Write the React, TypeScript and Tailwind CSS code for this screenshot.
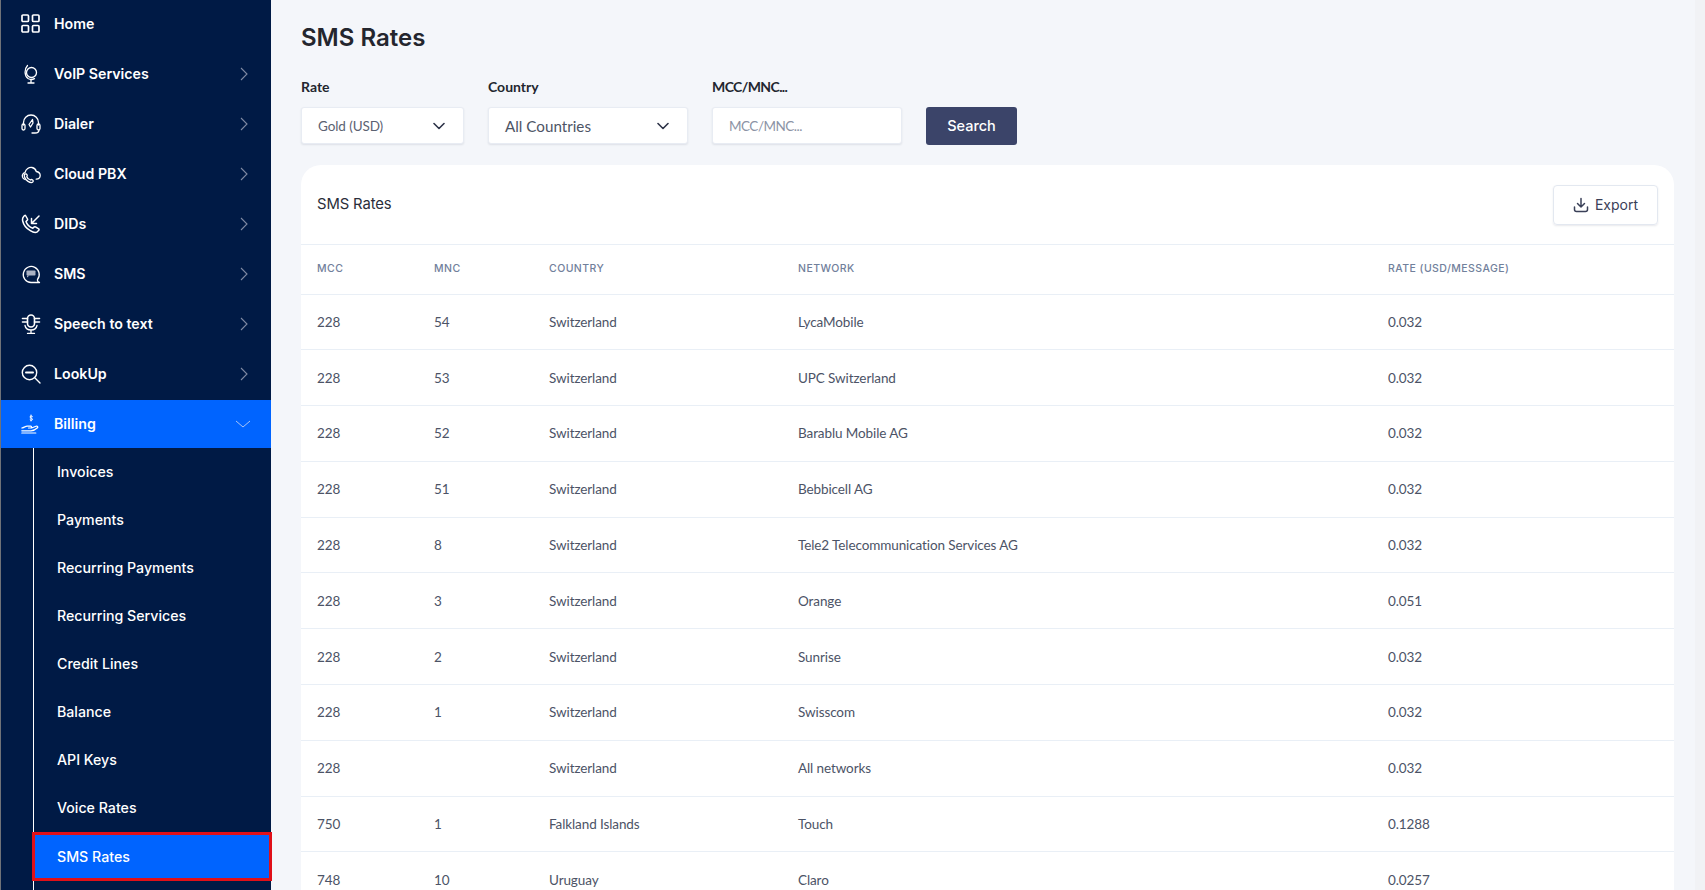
import React from "react";

const poppins = "font-['Inter','Liberation_Sans',sans-serif]";
const source = "font-['Lato','Noto_Sans',sans-serif]";

const base = { fill: "none", stroke: "white", strokeWidth: 1.3, strokeLinecap: "round" as const, strokeLinejoin: "round" as const };

const HomeIcon = () => (
  <svg width="20" height="20" viewBox="0 0 20 20" {...base} strokeWidth={1.7}>
    <rect x="1" y="1" width="6.5" height="6.5" rx="1" />
    <rect x="11.5" y="1" width="6.5" height="6.5" rx="1" />
    <rect x="1" y="11.5" width="6.5" height="6.5" rx="1" />
    <rect x="11.5" y="11.5" width="6.5" height="6.5" rx="1" />
  </svg>
);
const GlobeIcon = () => (
  <svg width="20" height="20" viewBox="0 0 20 20" {...base}>
    <circle cx="10.5" cy="8.5" r="5" />
    <path d="M6.5 1.500C3.200 5 3.200 11.500 7 14.500c2 1.200 4.500 1.200 6.500 .2" />
    <path d="M10 15.500v3M7 19h6" />
  </svg>
);
const HeadsetIcon = () => (
  <svg width="20" height="20" viewBox="0 0 20 20" {...base}>
    <path d="M2.500 11V8.500a7.500 7.500 0 0 1 15 0V11" />
    <rect x="1" y="10" width="3" height="6" rx="1.500" />
    <rect x="16" y="10" width="3" height="6" rx="1.500" />
    <path d="M18 16c0 2-2 3-4 3h-3" />
    <path d="M11.500 5.500 8 10.500l1.500 2.500 2.500-4z" />
  </svg>
);
const CloudIcon = () => (
  <svg width="20" height="20" viewBox="0 0 20 20" {...base}>
    <path d="M4 15.500C1.500 14.500 .5 12 2 10c.5-.8 1.200-1.200 2-1.400C4.800 5 8 3 11 3.500c2.200.4 3.800 2 4.300 4 2.200.4 3.900 2 3.900 4 0 2.200-1.700 3.500-4 3.700" />
    <path d="M3.500 10.500c.8-1 2-.8 2.500 .2.500 1 .2 1.500-.2 2 .5 1.500 2 2.800 3.700 3.300.5-.5 1.200-.7 2-.1.8.500 1 1.500.2 2.200-1 .8-3 .3-5-1-2.300-1.600-4-4.800-3.200-6.600z" />
  </svg>
);
const PhoneInIcon = () => (
  <svg width="20" height="20" viewBox="0 0 20 20" {...base} strokeWidth={1.5}>
    <path d="M4.500 1.500 6.500 5c.3.500 0 1-.4 1.400L5 7.500c.8 2.600 3.400 5.600 6.800 6.800l1.200-1.200c.4-.4 1-.5 1.500-.2l3.200 2c.5.300.5 1 .1 1.400l-1.500 1.500c-1.500 1-4 .7-7-1.200C5.500 14.500 2.500 10.500 1.700 7 1.300 5.200 1.600 3.800 2.500 2.800l.8-1c.3-.4.900-.6 1.200-.3z" />
    <path d="M18 2 10.500 9.500M10.500 4.500v5h5" />
  </svg>
);
const SmsIcon = () => (
  <svg width="20" height="20" viewBox="0 0 20 20" {...base}>
    <path d="M16.500 15.500A8 8 0 1 0 10 18.500h8.500a2.500 2.500 0 0 1-2-3z" />
    <rect x="5.500" y="6.500" width="9" height="5" rx=".8" fill="#aab2c4" stroke="none" />
    <path d="M6 11.500h2.500l-2.500 2z" fill="#aab2c4" stroke="none" />
  </svg>
);
const MicIcon = () => (
  <svg width="20" height="20" viewBox="0 0 20 20" {...base}>
    <rect x="6.500" y="1" width="7" height="12" rx="3.500" strokeWidth={1.6} />
    <path d="M4 11.500c.5 2.500 3 4.500 6 4.500s5.500-2 6-4.500M10 16v3M6.500 19.500h7" />
    <path d="M1.500 4.500h5M1.500 8h5M13.500 4.500h5M13.500 8h5" strokeWidth={1.6} />
  </svg>
);
const SearchMinusIcon = () => (
  <svg width="20" height="20" viewBox="0 0 20 20" {...base} strokeWidth={1.4}>
    <circle cx="8.500" cy="8.500" r="7.200" />
    <path d="M5 8.500h7" strokeWidth={2} />
    <path d="M14 14l5 5" />
  </svg>
);
const HandIcon = () => (
  <svg width="20" height="20" viewBox="0 0 20 20" {...base} strokeWidth={1.2}>
    <path d="M11.500 2.500c-.5-.8-2.500-.8-2.500.5s2.500 1 2.500 2.300-2 1.300-2.500.5M10 1v6" strokeWidth={1} />
    <path d="M.8 14c2-.3 3.500-1.800 5.500-1.800h3.500c1 0 1 1.800 0 1.800H7.500m3 0 4.500-1.800c1.500-.5 2.300.8 1.500 1.600-1.800 1.700-4 3-6.500 3H.8" />
    <path d="M.8 19h14" />
  </svg>
);

const Chev = ({ down }: { down?: boolean }) =>
  down ? (
    <svg width="16" height="8" viewBox="0 0 16 8" fill="none" stroke="#a9c4f5" strokeWidth="1">
      <path d="M1 1l7 6 7-6" />
    </svg>
  ) : (
    <svg width="8" height="14" viewBox="0 0 8 14" fill="none" stroke="#7f8aa3" strokeWidth="1.1">
      <path d="M1 1l6 6-6 6" />
    </svg>
  );

const nav = [
  { label: "Home", icon: <HomeIcon /> },
  { label: "VoIP Services", icon: <GlobeIcon />, chev: true },
  { label: "Dialer", icon: <HeadsetIcon />, chev: true },
  { label: "Cloud PBX", icon: <CloudIcon />, chev: true },
  { label: "DIDs", icon: <PhoneInIcon />, chev: true },
  { label: "SMS", icon: <SmsIcon />, chev: true },
  { label: "Speech to text", icon: <MicIcon />, chev: true },
  { label: "LookUp", icon: <SearchMinusIcon />, chev: true },
];

const sub = ["Invoices", "Payments", "Recurring Payments", "Recurring Services", "Credit Lines", "Balance", "API Keys", "Voice Rates"];

const rows = [
  ["228", "54", "Switzerland", "LycaMobile", "0.032"],
  ["228", "53", "Switzerland", "UPC Switzerland", "0.032"],
  ["228", "52", "Switzerland", "Barablu Mobile AG", "0.032"],
  ["228", "51", "Switzerland", "Bebbicell AG", "0.032"],
  ["228", "8", "Switzerland", "Tele2 Telecommunication Services AG", "0.032"],
  ["228", "3", "Switzerland", "Orange", "0.051"],
  ["228", "2", "Switzerland", "Sunrise", "0.032"],
  ["228", "1", "Switzerland", "Swisscom", "0.032"],
  ["228", "", "Switzerland", "All networks", "0.032"],
  ["750", "1", "Falkland Islands", "Touch", "0.1288"],
  ["748", "10", "Uruguay", "Claro", "0.0257"],
];

const SelectChevron = () => (
  <svg width="12" height="8" viewBox="0 0 12 8" fill="none" stroke="#2d3348" strokeWidth="1.6" strokeLinecap="round" strokeLinejoin="round">
    <path d="M1 1.500l5 5 5-5" />
  </svg>
);

export default function App() {
  return (
    <div className={`flex h-[890px] w-full overflow-hidden bg-[#f4f6fa] ${source}`}>
      <aside className={`relative z-10 h-full w-[271px] shrink-0 border-l border-l-[#6f7278] bg-[#001a45] text-white ${poppins}`}>
        {nav.map((n) => (
          <div key={n.label} className="flex h-[50px] items-center pb-[2px] pl-[20px] pr-[23px]">
            <span className="flex w-[20px] justify-center">{n.icon}</span>
            <span className="ml-[13px] flex-1 text-[14.200px] font-semibold">{n.label}</span>
            {n.chev && <Chev />}
          </div>
        ))}
        <div className="flex h-[48px] items-center bg-[#0064ff] pl-[20px] pr-[20px]">
          <span className="flex w-[20px] justify-center"><HandIcon /></span>
          <span className="ml-[13px] flex-1 text-[14.200px] font-semibold">Billing</span>
          <Chev down />
        </div>
        <div className="ml-[32px] h-[500px] border-l border-l-white">
          {sub.map((s) => (
            <div key={s} className="flex h-[48px] items-center pl-[23px] text-[14.200px] font-medium">{s}</div>
          ))}
          <div className="-ml-[2px] flex h-[49px] w-[240px] items-center border-[3px] border-[#e01018] bg-[#0064ff] pl-[22px] text-[14.200px] font-medium">SMS Rates</div>
        </div>
      </aside>

      <main className="min-w-0 flex-1 pl-[30px] pr-[21px]">
        <h1 className={`flex h-[75px] items-center text-[24px] font-semibold text-[#24262e] ${poppins}`}>SMS Rates</h1>
        <div className="flex items-end">
          <div className="mr-[24px] w-[163px]">
            <div className="mb-[9px] text-[14px] font-bold leading-[23px] text-[#23262f]">Rate</div>
            <div className="flex h-[37px] items-center justify-between rounded-[3px] border border-[#e8ecf3] bg-white pl-[16px] pr-[18px] pt-[1px] text-[13.500px] tracking-[-0.1px] text-[#5b6272] shadow-[0_1px_2px_rgba(30,40,70,0.1)]">
              Gold (USD) <SelectChevron />
            </div>
          </div>
          <div className="mr-[24px] w-[200px]">
            <div className="mb-[9px] text-[14px] font-bold leading-[23px] text-[#23262f]">Country</div>
            <div className="flex h-[37px] items-center justify-between rounded-[3px] border border-[#e8ecf3] bg-white pl-[16px] pr-[18px] pt-[1px] text-[15.200px] text-[#4d5465] shadow-[0_1px_2px_rgba(30,40,70,0.1)]">
              All Countries <SelectChevron />
            </div>
          </div>
          <div className="mr-[24px] w-[190px]">
            <div className="mb-[9px] text-[14px] font-bold leading-[23px] tracking-[-0.6px] text-[#23262f]">MCC/MNC...</div>
            <div className="flex h-[37px] items-center rounded-[3px] border border-[#e8ecf3] bg-white pl-[16px] pt-[1px] text-[13.500px] tracking-[-0.5px] text-[#8c93a5] shadow-[0_1px_2px_rgba(30,40,70,0.1)]">MCC/MNC...</div>
          </div>
          <button className={`-mb-[1px] flex h-[38px] w-[91px] items-center justify-center rounded-[3px] bg-[#3b4469] pb-[1px] text-[14.500px] font-medium text-white ${poppins}`}>Search</button>
        </div>

        <section className="mt-[21px] rounded-tl-[20px] rounded-tr-[20px] bg-white">
          <div className="flex h-[80px] items-center justify-between border-b border-b-[#e9eff6] pl-[16px] pr-[16px]">
            <h2 className={`text-[14.800px] font-normal tracking-[-0.1px] text-[#2a2e3a] ${poppins}`}>SMS Rates</h2>
            <button className={`flex h-[40px] w-[105px] items-center justify-center gap-[6px] rounded-[4px] border border-[#e3e8f0] text-[14px] text-[#3a4058] shadow-[0_1px_2px_rgba(30,40,70,0.1)] ${poppins}`}>
              <svg width="16" height="16" viewBox="0 0 16 16" fill="none" stroke="#3a4058" strokeWidth="1.5" strokeLinecap="round" strokeLinejoin="round">
                <path d="M8 1.500v8.500M4.500 6.500 8 10l3.500-3.500M1.500 10v2.500A2 2 0 0 0 3.500 14.500h9a2 2 0 0 0 2-2V10" />
              </svg>
              Export
            </button>
          </div>
          <table className="w-full table-fixed border-collapse">
            <colgroup>
              <col className="w-[117px]" />
              <col className="w-[115px]" />
              <col className="w-[249px]" />
              <col className="w-[590px]" />
              <col />
            </colgroup>
            <thead>
              <tr className="h-[49px] border-b border-b-[#e9eff6]">
                {["MCC", "MNC", "COUNTRY", "NETWORK", "RATE (USD/MESSAGE)"].map((h) => (
                  <th key={h} className={`pl-[16px] text-left text-[10.500px] font-medium tracking-[0.45px] text-[#71809b] ${poppins}`}>{h}</th>
                ))}
              </tr>
            </thead>
            <tbody>
              {rows.map((r, i) => (
                <tr key={i} className="h-[55.800px] border-b border-b-[#e9eff6]">
                  {r.map((c, j) => (
                    <td key={j} className="pl-[16px] text-[13.500px] tracking-[-0.1px] text-[#4c5366]">{c}</td>
                  ))}
                </tr>
              ))}
            </tbody>
          </table>
        </section>
      </main>
      <div className="h-full w-[10px] shrink-0 bg-[#f1f2f5]" />
    </div>
  );
}
